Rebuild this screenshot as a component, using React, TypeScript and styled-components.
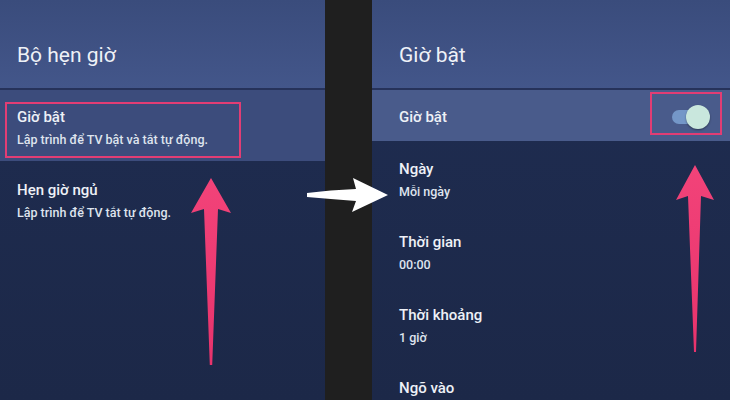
import React from "react";
import styled, { createGlobalStyle } from "styled-components";

const Global = createGlobalStyle`
  html, body { margin: 0; padding: 0; background: #1e1e1e; }
  body { font-family: Roboto, "Noto Sans", "Liberation Sans", sans-serif; }
  * { box-sizing: border-box; }
`;

const Page = styled.div`
  position: relative;
  width: 730px;
  height: 400px;
  overflow: hidden;
  display: flex;
  background: #1e1e1e;
`;

const Panel = styled.section<{ $w?: number }>`
  ${(p) => (p.$w ? `width: ${p.$w}px; flex: none;` : "flex: 1;")}
  height: 400px;
  display: flex;
  flex-direction: column;
  background: linear-gradient(180deg, #1f2d52 0%, #1c2848 100%);
`;

const Gap = styled.div`
  width: 47px;
  flex: none;
  background: #1f1f1f;
`;

const Header = styled.header<{ $pad: number }>`
  height: 90px;
  flex: none;
  padding: 41px 0 0 ${(p) => p.$pad}px;
  background: linear-gradient(180deg, #3a4c7c 0%, #43568a 100%);
  border-bottom: 2px solid #26325a;
`;

const Title = styled.h1`
  margin: 0;
  font-size: 21px;
  font-weight: 400;
  line-height: 28px;
  color: #eef1f7;
`;

const SelectedRow = styled.div<{ $h: number; $bg: string }>`
  height: ${(p) => p.$h}px;
  flex: none;
  position: relative;
  display: flex;
  align-items: center;
  background: ${(p) => p.$bg};
`;

const Highlight = styled.div`
  position: absolute;
  border: 2.5px solid #e23d74;
`;

const List = styled.div<{ $pad: number; $top: number }>`
  display: flex;
  flex-direction: column;
  padding: ${(p) => p.$top}px 0 0 ${(p) => p.$pad}px;
`;

const Item = styled.div<{ $h: number }>`
  height: ${(p) => p.$h}px;
  display: flex;
  flex-direction: column;
`;

const ItemTitle = styled.div`
  font-size: 15px;
  font-weight: 500;
  line-height: 20px;
  color: #eef1f7;
`;

const ItemSub = styled.div`
  font-size: 12.5px;
  font-weight: 500;
  line-height: 20px;
  margin-top: 3px;
  color: #dfe4ee;
`;

const RowLabel = styled.div`
  font-size: 15px;
  font-weight: 500;
  color: #eef1f7;
  padding: 3px 0 0 27px;
  flex: 1;
`;

const Toggle = styled.div`
  position: relative;
  width: 40px;
  height: 24px;
  margin: 2px 18px 0 0;
  display: flex;
  align-items: center;
`;

const Track = styled.div`
  width: 30px;
  height: 14px;
  border-radius: 7px;
  background: #7497c8;
`;

const Knob = styled.div`
  position: absolute;
  left: 14px;
  top: 0;
  width: 24px;
  height: 24px;
  border-radius: 50%;
  background: #c9e7dd;
  box-shadow: 0 1px 2px rgba(0, 0, 0, 0.4);
`;

const Overlay = styled.svg`
  position: absolute;
  left: 0;
  top: 0;
  pointer-events: none;
`;

export default function App() {
  return (
    <Page>
      <Global />
      <Panel $w={325}>
        <Header $pad={17}>
          <Title>Bộ hẹn giờ</Title>
        </Header>
        <SelectedRow $h={71} $bg="#3c4c7c">
          <Highlight style={{ left: 5, top: 12, width: 236, height: 56 }} />
          <List $pad={17} $top={12}>
            <Item $h={50}>
              <ItemTitle>Giờ bật</ItemTitle>
              <ItemSub>Lập trình để TV bật và tắt tự động.</ItemSub>
            </Item>
          </List>
        </SelectedRow>
        <List $pad={17} $top={19}>
          <Item $h={50}>
            <ItemTitle>Hẹn giờ ngủ</ItemTitle>
            <ItemSub>Lập trình để TV tắt tự động.</ItemSub>
          </Item>
        </List>
      </Panel>
      <Gap />
      <Panel>
        <Header $pad={27}>
          <Title>Giờ bật</Title>
        </Header>
        <SelectedRow $h={51} $bg="#495b8b">
          <RowLabel>Giờ bật</RowLabel>
          <Toggle>
            <Track />
            <Knob />
          </Toggle>
          <Highlight style={{ left: 278, top: 2, width: 72, height: 43 }} />
        </SelectedRow>
        <List $pad={27} $top={18}>
          {[
            ["Ngày", "Mỗi ngày"],
            ["Thời gian", "00:00"],
            ["Thời khoảng", "1 giờ"],
            ["Ngõ vào", ""],
          ].map(([t, s]) => (
            <Item key={t} $h={73}>
              <ItemTitle>{t}</ItemTitle>
              {s && <ItemSub>{s}</ItemSub>}
            </Item>
          ))}
        </List>
      </Panel>
      <Overlay width="730" height="400" viewBox="0 0 730 400">
        <defs>
          <linearGradient id="pk" x1="0" y1="0" x2="0" y2="1">
            <stop offset="0" stopColor="#f24379" />
            <stop offset="1" stopColor="#e8336c" />
          </linearGradient>
        </defs>
        <path
          d="M211 178 L231 213 L218 209 L212.2 365 L209.8 365 L204 209 L191 213 Z"
          fill="url(#pk)"
        />
        <path
          d="M695 165 L714 200 L701 196 L696 352 L694 352 L688 196 L676 200 Z"
          fill="url(#pk)"
        />
        <path
          d="M307 193 Q330 190 356 189 L353 178 L388 195 L352 212 L356 201 Q330 199 307 197 Z"
          fill="#ffffff"
        />
      </Overlay>
    </Page>
  );
}
